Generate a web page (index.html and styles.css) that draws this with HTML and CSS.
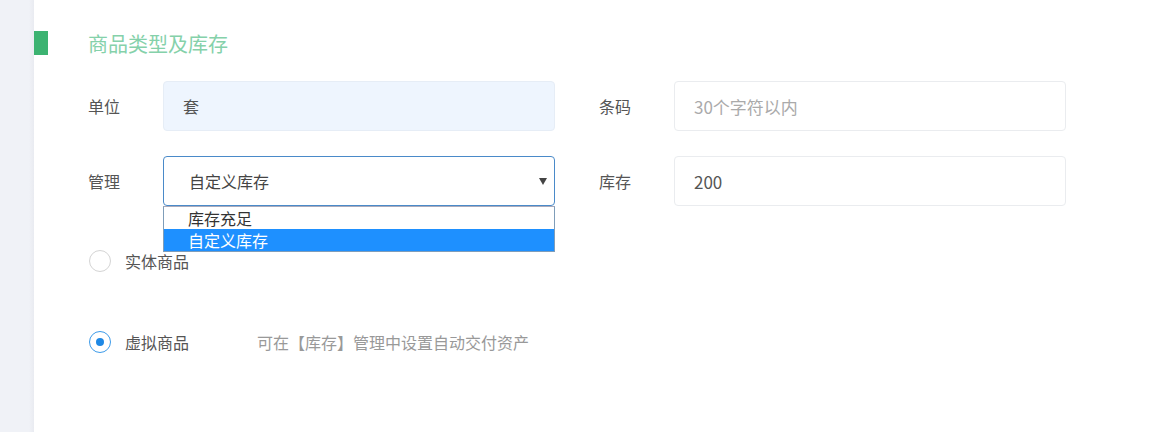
FILE: index.html
```html
<!DOCTYPE html>
<html lang="zh-CN">
<head>
<meta charset="UTF-8">
<meta name="viewport" content="width=device-width, initial-scale=1.0">
<title>商品类型及库存</title>
<link rel="stylesheet" href="styles.css">
</head>
<body>

<div class="page">
    <div class="side"></div>
    <div class="main">
        <div class="title">
            <span class="bar"></span>
            <h2>商品类型及库存</h2>
        </div>

        <div class="row first">
            <div class="field">
                <label>单位</label>
                <div class="box filled">套</div>
            </div>
            <div class="field">
                <label>条码</label>
                <input class="box" type="text" placeholder="30个字符以内">
            </div>
        </div>

        <div class="row">
            <div class="field">
                <label>管理</label>
                <div class="select">
                    <div class="box active">自定义库存<span class="arrow"></span></div>
                    <ul class="options">
                        <li>库存充足</li>
                        <li class="selected">自定义库存</li>
                    </ul>
                </div>
            </div>
            <div class="field">
                <label>库存</label>
                <input class="box" type="text" value="200">
            </div>
        </div>

        <div class="radios">
            <div class="radio">
                <span class="circle"></span>
                <span class="text">实体商品</span>
            </div>
            <div class="radio">
                <span class="circle on"></span>
                <span class="text">虚拟商品</span>
                <span class="hint">可在【库存】管理中设置自动交付资产</span>
            </div>
        </div>
    </div>
</div>

</body>
</html>
```

FILE: styles.css
```css
    body {
        font-family: "Noto Sans CJK SC", "Noto Sans", sans-serif;
        background-color: #fff;
        margin: 0;
        padding: 0;
        color: #555;
    }
    .page {
        display: flex;
        min-height: 432px;
    }
    .side {
        width: 34px;
        flex-shrink: 0;
        background: linear-gradient(to right, #f0f2f7 85%, #e9ebf1);
    }
    .main {
        flex: 1;
        padding-top: 31px;
    }
    .title {
        display: flex;
        align-items: center;
        height: 24px;
    }
    .bar {
        width: 14px;
        height: 24px;
        background-color: #3cb371;
    }
    .title h2 {
        margin: 0 0 0 40px;
        font-size: 20px;
        font-weight: normal;
        color: #85d1aa;
    }
    .row {
        display: flex;
        margin-left: 54px;
        margin-top: 25px;
    }
    .row.first {
        margin-top: 26px;
    }
    .field {
        display: flex;
        align-items: center;
        margin-right: 44px;
    }
    .field label {
        width: 75px;
        font-size: 16px;
        color: #555;
    }
    .box {
        width: 392px;
        height: 50px;
        box-sizing: border-box;
        border: 1px solid #eaecef;
        border-radius: 4px;
        padding: 0 19px;
        font-family: inherit;
        font-size: 17px;
        color: #555;
        background-color: #fff;
        display: flex;
        align-items: center;
        outline: none;
    }
    .box::placeholder {
        color: #aaa;
    }
    .filled {
        background-color: #eef5fe;
        border-color: #e6edf6;
        font-size: 16px;
    }
    .select {
        position: relative;
    }
    .select .active {
        border-color: #4a8ac9;
        padding-left: 25px;
        font-size: 16px;
        color: #444;
        position: relative;
    }
    .arrow {
        position: absolute;
        right: 7px;
        top: 21px;
        width: 0;
        height: 0;
        border-left: 4px solid transparent;
        border-right: 4px solid transparent;
        border-top: 7px solid #444;
    }
    .options {
        position: absolute;
        left: 0;
        top: 50px;
        width: 392px;
        box-sizing: border-box;
        margin: 0;
        padding: 0;
        list-style: none;
        border: 1px solid #7f9db9;
        border-top-color: #aab;
        background: #fff;
        z-index: 2;
    }
    .options li {
        height: 22px;
        line-height: 22px;
        padding-left: 24px;
        font-size: 16px;
        color: #333;
    }
    .options li.selected {
        background-color: #1e90ff;
        color: #fff;
    }
    .radios {
        margin-left: 55px;
        margin-top: 44px;
    }
    .radio {
        display: flex;
        align-items: center;
        height: 22px;
        margin-bottom: 59px;
    }
    .circle {
        width: 22px;
        height: 22px;
        box-sizing: border-box;
        border: 1px solid #d4d4d4;
        border-radius: 50%;
        margin-right: 14px;
        position: relative;
    }
    .circle.on {
        border-color: #3d9be9;
    }
    .circle.on::after {
        content: "";
        position: absolute;
        left: 6px;
        top: 6px;
        width: 8px;
        height: 8px;
        border-radius: 50%;
        background-color: #1e88e5;
    }
    .radio .text {
        font-size: 16px;
        color: #555;
        width: 132px;
    }
    .hint {
        font-size: 16px;
        color: #999;
    }
```
